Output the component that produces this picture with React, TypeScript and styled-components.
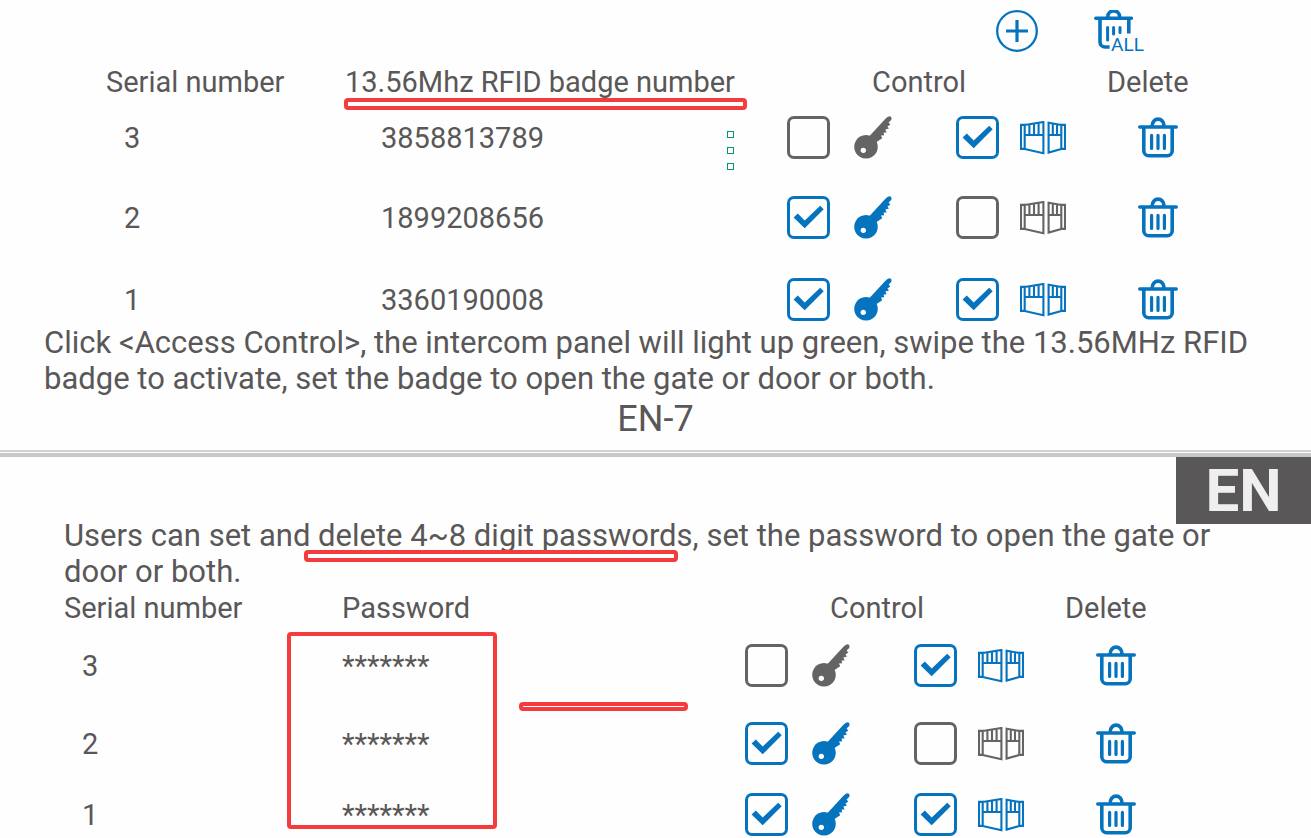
import React, { useState } from 'react';
import styled, { createGlobalStyle } from 'styled-components';

const BLUE = '#0573bd';
const GREY = '#646464';
const RED = '#f53c3c';

const GlobalStyle = createGlobalStyle`
  *, *::before, *::after { box-sizing: border-box; }
  body {
    margin: 0;
    background: #fefefe;
    color: #595757;
    font-family: Roboto, "Noto Sans", sans-serif;
    font-size: 29px;
    line-height: 36px;
  }
`;

const Sheet = styled.section`
  position: relative;
`;

const Toolbar = styled.div`
  display: flex;
  align-items: flex-start;
  justify-content: flex-end;
  gap: 56px;
  height: 64px;
  padding: 10px 163px 0 0;
`;

const IconButton = styled.button`
  display: flex;
  padding: 0;
  border: 0;
  background: none;
  color: ${BLUE};
  font: inherit;
  cursor: pointer;
`;

const Table = styled.table<{ $left: number; $right: number }>`
  width: calc(100% - ${p => p.$left + p.$right}px);
  margin: 0 ${p => p.$right}px 0 ${p => p.$left}px;
  table-layout: fixed;
  border-collapse: collapse;
`;

const Column = styled.col<{ $width?: number }>`
  width: ${p => (p.$width ? `${p.$width}px` : 'auto')};
`;

const HeadCell = styled.th<{ $indent?: number; $gap: number }>`
  padding: 0 0 ${p => p.$gap}px ${p => p.$indent ?? 0}px;
  font-weight: 400;
  text-align: left;
  white-space: nowrap;
`;

const Row = styled.tr<{ $height: number }>`
  height: ${p => p.$height}px;
`;

const Cell = styled.td<{ $indent?: number }>`
  padding: 0 0 0 ${p => p.$indent ?? 0}px;
  vertical-align: top;
`;

const Line = styled.div`
  display: flex;
  align-items: flex-start;
  justify-content: space-between;
  line-height: 44px;
`;

const MoreButton = styled.button`
  display: grid;
  gap: 9px;
  margin-right: 53px;
  padding: 15px 0 0;
  border: 0;
  background: none;
  cursor: pointer;
`;

const Dot = styled.span`
  width: 7px;
  height: 7px;
  border: 1px solid #009478;
`;

const Option = styled.label<{ $gap: number; $on: boolean }>`
  display: flex;
  align-items: center;
  gap: ${p => p.$gap}px;
  width: fit-content;
  color: ${p => (p.$on ? BLUE : GREY)};
`;

const Tick = styled.span`
  display: grid;
  & > * { grid-area: 1 / 1; }
  & > svg { pointer-events: none; }
`;

const Box = styled.input`
  appearance: none;
  width: 43px;
  height: 43px;
  margin: 0;
  border: 3px solid currentColor;
  border-radius: 7px;
  color: inherit;
`;

const Paragraph = styled.p<{ $left: number; $right: number }>`
  margin: 0;
  padding: 0 ${p => p.$right}px 0 ${p => p.$left}px;
  font-size: 31px;
`;

const Marked = styled.span`
  position: relative;
`;

const Underline = styled.span<{ $left: number; $right: number }>`
  position: absolute;
  left: ${p => p.$left}px;
  right: ${p => p.$right}px;
  top: 33px;
  height: 12px;
  border: 4px solid ${RED};
  border-radius: 4px;
`;

const Frame = styled.span`
  position: absolute;
  left: 287px;
  top: 175px;
  width: 210px;
  height: 197px;
  border: 4px solid ${RED};
  border-radius: 4px;
`;

const Dash = styled.span`
  position: absolute;
  left: 519px;
  top: 245px;
  width: 169px;
  height: 9px;
  border: 4px solid ${RED};
  border-radius: 4px;
`;

const PageNumber = styled.footer`
  padding: 4px 0 13px;
  font-size: 36px;
  text-align: center;
`;

const Divider = styled.hr`
  height: 7px;
  margin: 0;
  border: 0;
  border-top: 2px solid #cfcfcf;
  border-bottom: 4px solid #c8c8c8;
`;

const Language = styled.div`
  display: flex;
  align-items: center;
  justify-content: center;
  width: 135px;
  height: 67px;
  margin: 0 0 -6px auto;
  background: #595757;
  color: #efefef;
  font-size: 60px;
  font-weight: 700;
`;

const AddIcon = () => (
  <svg width="42" height="42" viewBox="0 0 42 42" fill="none" stroke="currentColor" aria-hidden="true">
    <circle cx="21" cy="21" r="19.8" strokeWidth="2.3" />
    <path d="M21 10v22M10 21h22" strokeWidth="3.2" />
  </svg>
);

const TrashIcon = () => (
  <svg width="40" height="43" viewBox="0 -1 40 43" fill="none" stroke="currentColor" strokeWidth="3.6" strokeLinecap="round" aria-hidden="true">
    <path d="M1.8 10h36.4M14.2 8.6a5.8 6.4 0 0 1 11.8 0M5.8 10.5v23.3a5 5 0 0 0 5 5h18.4a5 5 0 0 0 5-5V10.5" />
    <path d="M13.6 18.4v13M20 18.4v13M26.4 18.4v13" strokeWidth="3.2" />
  </svg>
);

const AllLabel = styled.text`
  fill: currentColor;
  stroke: none;
  font-size: 19px;
`;

const TrashAllIcon = () => (
  <svg width="54" height="48" viewBox="0 0 54 48" fill="none" stroke="currentColor" strokeWidth="3.6" aria-hidden="true">
    <path d="M1.8 8.2h35.6M13.8 6.6a5.8 5.6 0 0 1 11.8 0" strokeLinecap="round" />
    <path d="M6 9v23a5 5 0 0 0 5 5h4.6M34.8 9v14.6" />
    <path d="M13.6 17.5v12.6M19.6 17.5v6.6M26 17.5v5" strokeWidth="3" strokeLinecap="round" />
    <AllLabel x="17" y="41">ALL</AllLabel>
  </svg>
);

const KeyIcon = () => (
  <svg width="38" height="43" viewBox="0 0 38 43" fill="currentColor" aria-hidden="true">
    <path d="M14.6 21 31.2 3Q33.6.4 35.4.2 37.4.2 37.6 2.2 37.8 3.8 35.6 5.6L34.6 6.8 36.4 8.4 33.4 10.4 35 12.6 31.4 13.6 32.6 16.4 29.6 16.6 30.2 19.2 27 19.4 28.2 22.2 21 27Z" />
    <path fillRule="evenodd" d="M12 19a11.8 11.8 0 1 1-.01 0ZM9.3 31.7a2.7 2.7 0 1 0 .01 0Z" />
  </svg>
);

const GateIcon = () => (
  <svg width="46" height="34" viewBox="0 0 46 34" fill="none" stroke="currentColor" strokeWidth="2.1" aria-hidden="true">
    <path d="M1 3.9h3.7v24H1zM4.7 4 23.4 1v31.2L4.7 28M4.7 14h19M9.4 3.3V14M14 2.5V14M18.6 1.8V14" />
    <path d="M45 3.9h-3.7v24H45zM41.3 4 28.6 1.7v29.9L41.3 28M41.3 14H28.6M32.8 2.4V14M37 3.2V14" />
  </svg>
);

const TickIcon = () => (
  <svg width="43" height="43" viewBox="0 0 43 43" fill="currentColor" aria-hidden="true">
    <path d="M6.6 21.6 10.8 17.6l6.9 7L33.2 9.8l3.5 3.5L17.7 32.2Z" />
  </svg>
);

type Entry = { serial: number; value: string; door: boolean; gate: boolean; height: number };

const badges: Entry[] = [
  { serial: 3, value: '3858813789', door: false, gate: true, height: 80 },
  { serial: 2, value: '1899208656', door: true, gate: false, height: 82 },
  { serial: 1, value: '3360190008', door: true, gate: true, height: 47 },
];

const passwords: Entry[] = [
  { serial: 3, value: '*******', door: false, gate: true, height: 78 },
  { serial: 2, value: '*******', door: true, gate: false, height: 71 },
  { serial: 1, value: '*******', door: true, gate: true, height: 44 },
];

function AccessOption({ label, initial, gap, children }: { label: string; initial: boolean; gap: number; children: React.ReactNode }) {
  const [on, setOn] = useState(initial);
  return (
    <Option $gap={gap} $on={on}>
      <Tick>
        <Box type="checkbox" aria-label={label} checked={on} onChange={e => setOn(e.target.checked)} />
        {on && <TickIcon />}
      </Tick>
      {children}
    </Option>
  );
}

type AccessTableProps = {
  entries: Entry[];
  title: React.ReactNode;
  left: number;
  right: number;
  titleIndent: number;
  valueIndent: number;
  headGap: number;
  menu?: boolean;
};

function AccessTable({ entries, title, left, right, titleIndent, valueIndent, headGap, menu }: AccessTableProps) {
  return (
    <Table $left={left} $right={right}>
      <colgroup>
        <Column $width={239} />
        <Column />
        <Column $width={169} />
        <Column $width={151} />
        <Column $width={204} />
      </colgroup>
      <thead>
        <tr>
          <HeadCell scope="col" $gap={headGap}>Serial number</HeadCell>
          <HeadCell scope="col" $gap={headGap} $indent={titleIndent}>{title}</HeadCell>
          <HeadCell scope="colgroup" colSpan={2} $gap={headGap} $indent={85}>Control</HeadCell>
          <HeadCell scope="col" $gap={headGap}>Delete</HeadCell>
        </tr>
      </thead>
      <tbody>
        {entries.map((entry, i) => (
          <Row key={entry.serial} $height={entry.height}>
            <Cell $indent={18}><Line>{entry.serial}</Line></Cell>
            <Cell $indent={valueIndent}>
              <Line>
                {entry.value}
                {menu && i === 0 && (
                  <MoreButton aria-label="More"><Dot /><Dot /><Dot /></MoreButton>
                )}
              </Line>
            </Cell>
            <Cell>
              <AccessOption label={`Door access ${entry.serial}`} initial={entry.door} gap={24}><KeyIcon /></AccessOption>
            </Cell>
            <Cell>
              <AccessOption label={`Gate access ${entry.serial}`} initial={entry.gate} gap={21}><GateIcon /></AccessOption>
            </Cell>
            <Cell $indent={31}>
              <IconButton aria-label={`Delete ${entry.serial}`}><TrashIcon /></IconButton>
            </Cell>
          </Row>
        ))}
      </tbody>
    </Table>
  );
}

export default function App() {
  return (
    <main>
      <GlobalStyle />
      <Sheet>
        <Toolbar>
          <IconButton aria-label="Add badge"><AddIcon /></IconButton>
          <IconButton aria-label="Delete all badges"><TrashAllIcon /></IconButton>
        </Toolbar>
        <AccessTable
          entries={badges}
          left={106}
          right={0}
          titleIndent={0}
          valueIndent={36}
          headGap={16}
          menu
          title={
            <Marked>
              13.56Mhz RFID badge number
              <Underline $left={-1} $right={-12} />
            </Marked>
          }
        />
        <Paragraph $left={44} $right={40}>
          Click &lt;Access Control&gt;, the intercom panel will light up green, swipe the 13.56MHz RFID badge to
          activate, set the badge to open the gate or door or both.
        </Paragraph>
        <PageNumber>EN-7</PageNumber>
      </Sheet>
      <Divider />
      <Sheet>
        <Language>EN</Language>
        <Paragraph $left={64} $right={100}>
          Users can set and{' '}
          <Marked>
            delete 4~8 digit passwords
            <Underline $left={-14} $right={15} />
          </Marked>
          , set the password to open the gate or door or both.
        </Paragraph>
        <AccessTable
          entries={passwords}
          left={64}
          right={42}
          titleIndent={39}
          valueIndent={39}
          headGap={18}
          title="Password"
        />
        <Frame />
        <Dash />
      </Sheet>
    </main>
  );
}
